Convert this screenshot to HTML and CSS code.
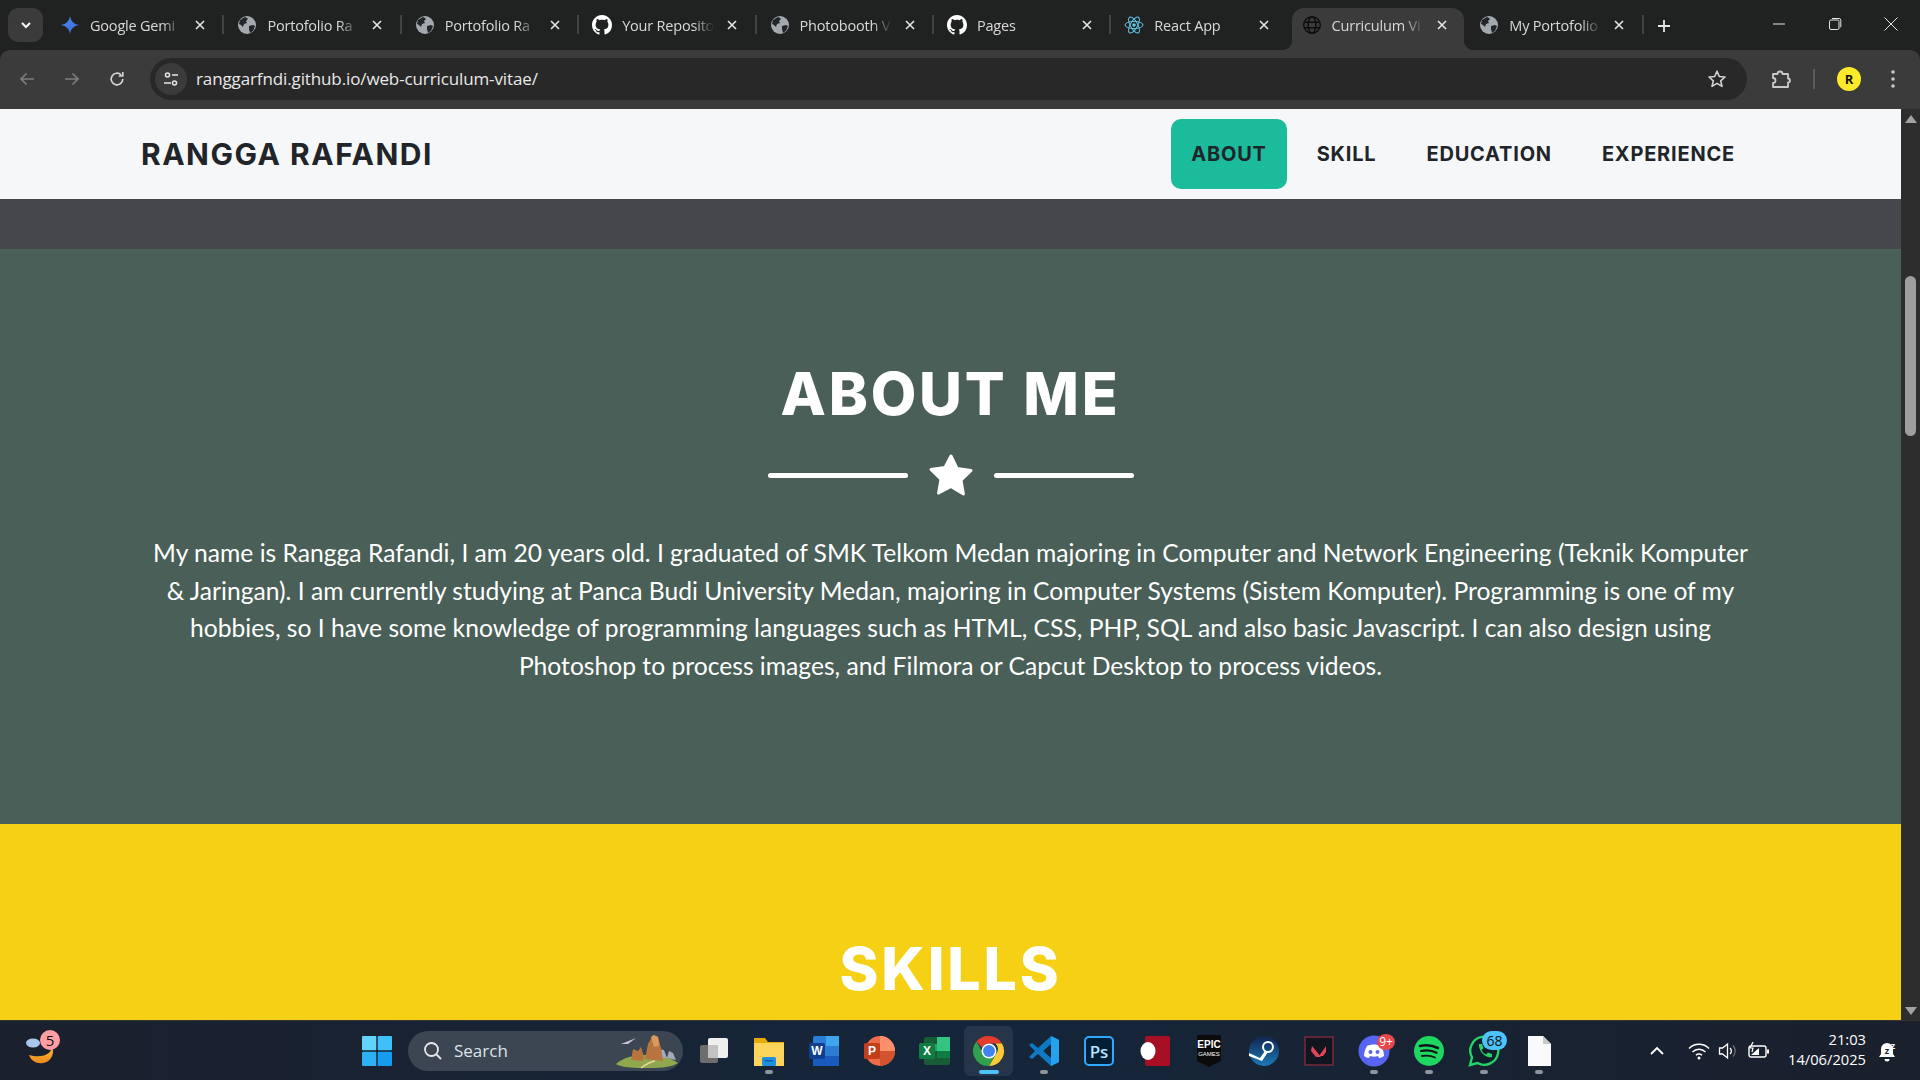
FILE: index.html
```html
<!DOCTYPE html>
<html lang="en">
<head>
    <meta charset="UTF-8">
    <meta name="viewport" content="width=device-width, initial-scale=1.0">
    <title>Curriculum Vitae</title>
    <link rel="stylesheet" href="styles.css">
</head>
<body>
    <svg class="defs" width="0" height="0">
        <symbol id="i-globe" viewBox="0 0 20 20">
            <circle cx="10" cy="10" r="9" fill="#a4a9b0"/>
            <path d="M3 5c2-1 3-2 5-3 1 1 3 1 3 2l-2 2 1 2-3 1-1 3-2-2-2-1zM12 11l4-1 2 1-2 5-3 2-1-4z" fill="#22262a"/>
        </symbol>
        <symbol id="i-github" viewBox="0 0 16 16">
            <path fill="#fff" d="M8 0C3.58 0 0 3.58 0 8c0 3.54 2.29 6.53 5.47 7.59.4.07.55-.17.55-.38 0-.19-.01-.82-.01-1.49-2.01.37-2.53-.49-2.69-.94-.09-.23-.48-.94-.82-1.13-.28-.15-.68-.52-.01-.53.63-.01 1.08.58 1.23.82.72 1.21 1.87.87 2.33.66.07-.52.28-.87.51-1.07-1.78-.2-3.64-.89-3.64-3.95 0-.87.31-1.59.82-2.15-.08-.2-.36-1.02.08-2.12 0 0 .67-.21 2.2.82.64-.18 1.32-.27 2-.27.68 0 1.36.09 2 .27 1.53-1.04 2.2-.82 2.2-.82.44 1.1.16 1.92.08 2.12.51.56.82 1.27.82 2.15 0 3.07-1.87 3.75-3.65 3.95.29.25.54.73.54 1.48 0 1.07-.01 1.93-.01 2.2 0 .21.15.46.55.38A8.013 8.013 0 0016 8c0-4.42-3.58-8-8-8z"/>
        </symbol>
        <symbol id="i-close" viewBox="0 0 12 12">
            <path d="M2 2l8 8M10 2l-8 8" stroke="#e6e6e6" stroke-width="1.6" fill="none"/>
        </symbol>
    </svg>

    <div class="tabstrip">
        <button class="tab-menu">
            <svg width="12" height="12" viewBox="0 0 12 12"><path d="M2 4l4 4 4-4" stroke="#fff" stroke-width="2" fill="none"/></svg>
        </button>
        <div class="tabs">
            <div class="tab">
                <svg class="favicon" viewBox="0 0 20 20"><defs><linearGradient id="gem" x1="0" y1="0" x2="1" y2="1"><stop offset="0" stop-color="#4b8df0"/><stop offset="1" stop-color="#3b64d8"/></linearGradient></defs><path d="M10 1c.8 5 3.6 8.200 9 9-5.400.8-8.200 4-9 9-.8-5-3.600-8.200-9-9 5.400-.8 8.200-4 9-9z" fill="url(#gem)"/></svg>
                <span class="tab-title">Google Gemi</span>
                <svg class="tab-close"><use href="#i-close"/></svg>
            </div>
            <div class="tab">
                <svg class="favicon"><use href="#i-globe"/></svg>
                <span class="tab-title">Portofolio Ra</span>
                <svg class="tab-close"><use href="#i-close"/></svg>
            </div>
            <div class="tab">
                <svg class="favicon"><use href="#i-globe"/></svg>
                <span class="tab-title">Portofolio Ra</span>
                <svg class="tab-close"><use href="#i-close"/></svg>
            </div>
            <div class="tab">
                <svg class="favicon"><use href="#i-github"/></svg>
                <span class="tab-title">Your Reposito</span>
                <svg class="tab-close"><use href="#i-close"/></svg>
            </div>
            <div class="tab">
                <svg class="favicon"><use href="#i-globe"/></svg>
                <span class="tab-title">Photobooth V</span>
                <svg class="tab-close"><use href="#i-close"/></svg>
            </div>
            <div class="tab">
                <svg class="favicon"><use href="#i-github"/></svg>
                <span class="tab-title">Pages</span>
                <svg class="tab-close"><use href="#i-close"/></svg>
            </div>
            <div class="tab">
                <svg class="favicon" viewBox="0 0 20 20"><g fill="none" stroke="#61c6e6" stroke-width="1"><ellipse cx="10" cy="10" rx="9" ry="3.600"/><ellipse cx="10" cy="10" rx="9" ry="3.600" transform="rotate(60 10 10)"/><ellipse cx="10" cy="10" rx="9" ry="3.600" transform="rotate(120 10 10)"/></g><circle cx="10" cy="10" r="1.800" fill="#61c6e6"/></svg>
                <span class="tab-title">React App</span>
                <svg class="tab-close"><use href="#i-close"/></svg>
            </div>
            <div class="tab tab-active">
                <svg class="favicon" viewBox="0 0 20 20"><g fill="none" stroke="#0c0c0c" stroke-width="1.400"><circle cx="10" cy="10" r="8.300"/><ellipse cx="10" cy="10" rx="3.800" ry="8.300"/><path d="M2 7.200h16M2 12.800h16"/></g></svg>
                <span class="tab-title">Curriculum Vi</span>
                <svg class="tab-close"><use href="#i-close"/></svg>
            </div>
            <div class="tab">
                <svg class="favicon"><use href="#i-globe"/></svg>
                <span class="tab-title">My Portofolio</span>
                <svg class="tab-close"><use href="#i-close"/></svg>
            </div>
            <svg class="new-tab" width="16" height="16" viewBox="0 0 16 16"><path d="M8 2v12M2 8h12" stroke="#e6e6e6" stroke-width="1.800"/></svg>
        </div>
        <div class="window-btns">
            <svg width="14" height="14" viewBox="0 0 14 14"><path d="M1 7h12" stroke="#e6e6e6" stroke-width="1"/></svg>
            <svg width="14" height="14" viewBox="0 0 14 14"><rect x="1.500" y="3" width="9.500" height="9.500" rx="1.500" fill="none" stroke="#e6e6e6"/><path d="M4 1.500h7a1.800 1.800 0 0 1 1.800 1.800v7" fill="none" stroke="#e6e6e6"/></svg>
            <svg width="14" height="14" viewBox="0 0 14 14"><path d="M.5.5l13 13M13.500.5l-13 13" stroke="#e6e6e6" stroke-width="1"/></svg>
        </div>
    </div>

    <div class="toolbar">
        <svg class="tool tool-dim" viewBox="0 0 18 18"><path d="M16 9H3M8.500 3.500L3 9l5.500 5.500" fill="none" stroke="#7d7d7d" stroke-width="1.700"/></svg>
        <svg class="tool tool-dim" viewBox="0 0 18 18"><path d="M2 9h13M9.500 3.500L15 9l-5.500 5.500" fill="none" stroke="#7d7d7d" stroke-width="1.700"/></svg>
        <svg class="tool" viewBox="0 0 18 18"><path d="M14.800 9a5.800 5.800 0 1 1-1.700-4.100M14.800 2v4h-4" fill="none" stroke="#d4d4d4" stroke-width="1.700"/></svg>
        <div class="urlbar">
            <span class="site-info">
                <svg width="16" height="16" viewBox="0 0 16 16"><g fill="none" stroke="#e6e6e6" stroke-width="1.500"><circle cx="4.500" cy="4" r="2"/><circle cx="11.500" cy="12" r="2"/><path d="M9 4h6M1 12h7"/></g></svg>
            </span>
            <span class="url">ranggarfndi.github.io/web-curriculum-vitae/</span>
            <svg class="url-star" width="20" height="20" viewBox="0 0 20 20"><path d="M10 2.200l2.300 5.300 5.700.5-4.300 3.800 1.300 5.600-5-3-5 3 1.300-5.600L2 8l5.700-.5z" fill="none" stroke="#d4d4d4" stroke-width="1.600" stroke-linejoin="round"/></svg>
        </div>
        <svg class="puzzle" width="22" height="22" viewBox="0 0 22 22"><path d="M3 6h4.500a2.500 2.500 0 0 1 5 0H18v4.500a2 2 0 0 1 0 4V19H3v-4a2.500 2.500 0 0 0 0-5z" fill="none" stroke="#c9c9c9" stroke-width="1.800" stroke-linejoin="round"/></svg>
        <span class="tool-sep"></span>
        <span class="avatar">R</span>
        <svg class="dots" width="4" height="18" viewBox="0 0 4 18"><circle cx="2" cy="2" r="1.800" fill="#c9c9c9"/><circle cx="2" cy="9" r="1.800" fill="#c9c9c9"/><circle cx="2" cy="16" r="1.800" fill="#c9c9c9"/></svg>
    </div>

    <div class="viewport">
        <div class="page">
            <nav class="navbar">
                <a class="brand" href="#">RANGGA RAFANDI</a>
                <ul class="nav-links">
                    <li><a class="active" href="#">ABOUT</a></li>
                    <li><a href="#">SKILL</a></li>
                    <li><a href="#">EDUCATION</a></li>
                    <li><a href="#">EXPERIENCE</a></li>
                </ul>
            </nav>
            <div class="band"></div>
            <section class="about">
                <h2>ABOUT ME</h2>
                <div class="divider">
                    <span class="line"></span>
                    <svg width="46" height="44" viewBox="0 0 46 44"><path d="M23 3l6 12.500 14 2-10 9.800 2.400 13.700L23 33.500 10.600 40 13 26.300 3 16.500l14-2z" fill="#fff" stroke="#fff" stroke-width="3" stroke-linejoin="round"/></svg>
                    <span class="line"></span>
                </div>
                <p>My name is Rangga Rafandi, I am 20 years old. I graduated of SMK Telkom Medan majoring in Computer and Network Engineering (Teknik Komputer &amp; Jaringan). I am currently studying at Panca Budi University Medan, majoring in Computer Systems (Sistem Komputer). Programming is one of my hobbies, so I have some knowledge of programming languages such as HTML, CSS, PHP, SQL and also basic Javascript. I can also design using Photoshop to process images, and Filmora or Capcut Desktop to process videos.</p>
            </section>
            <section class="skills">
                <h2>SKILLS</h2>
            </section>
        </div>
        <div class="scrollbar">
            <svg width="12" height="8" viewBox="0 0 12 8"><path d="M6 0l6 8H0z" fill="#a3a3a3"/></svg>
            <span class="thumb"></span>
            <svg class="arrow-down" width="12" height="8" viewBox="0 0 12 8"><path d="M6 8l6-8H0z" fill="#a3a3a3"/></svg>
        </div>
    </div>

    <div class="taskbar">
        <div class="weather">
            <svg width="36" height="36" viewBox="0 0 36 36"><defs><linearGradient id="moon" x1="0" y1="0" x2="0" y2="1"><stop offset="0" stop-color="#f8c23a"/><stop offset="1" stop-color="#ee8a1c"/></linearGradient></defs><path d="M26 12c3 8-8 14-22 10 2 6 8 9 14 8 8-1 13-10 8-18z" fill="url(#moon)"/><ellipse cx="8" cy="10" rx="7" ry="4.500" fill="#a9c6ec"/></svg>
            <span class="badge badge-pink">5</span>
        </div>
        <svg class="start" width="30" height="30" viewBox="0 0 30 30"><rect x="0" y="0" width="14.300" height="14.300" rx="1" fill="#62d3fb"/><rect x="15.700" y="0" width="14.300" height="14.300" rx="1" fill="#3fc0f8"/><rect x="0" y="15.700" width="14.300" height="14.300" rx="1" fill="#2eb0f5"/><rect x="15.700" y="15.700" width="14.300" height="14.300" rx="1" fill="#159cf0"/></svg>
        <div class="search">
            <svg width="20" height="20" viewBox="0 0 20 20"><circle cx="8.500" cy="8.500" r="6.500" fill="none" stroke="#e8e8e8" stroke-width="1.800"/><path d="M13.500 13.500L18 18" stroke="#e8e8e8" stroke-width="1.800"/></svg>
            <span>Search</span>
            <svg class="search-art" width="64" height="36" viewBox="0 0 64 36"><path d="M1 31c8-7 18-9 30-9s24 2 32 8c-6 4-16 5-28 5S6 35 1 31z" fill="#8fa84e"/><path d="M42 24l2-8 5 1 3 8zM52 25l2-7 4 2 3 7z" fill="#a7a9bd"/><path d="M16 27l2-11 5 2 3-4 3 10-1 4zM30 26l3-15 5-9 5 2 3 11 2 13z" fill="#b9733e"/><path d="M36 4l3-2 4 2 1 9-5 1z" fill="#d99a5c"/><path d="M6 11l15-6-8 6z" fill="#c9c4da"/><path d="M26 35c4-3 8-6 14-7" stroke="#e8d9a0" stroke-width="1.500" fill="none"/></svg>
        </div>
        <div class="apps">
            <div class="app">
                <svg viewBox="0 0 32 32"><rect x="2" y="10" width="18" height="18" rx="2" fill="#6d6d6d"/><rect x="10" y="3" width="20" height="20" rx="2" fill="#efefef"/><rect x="10" y="10" width="10" height="13" fill="#c2c2c2"/></svg>
            </div>
            <div class="app running">
                <svg viewBox="0 0 32 32"><path d="M1 3h11l3 4h16v24H1z" fill="#e8a90d"/><rect x="1" y="8" width="30" height="23" fill="#fdd55c"/><rect x="9" y="22" width="14" height="9" rx="1.500" fill="#1f8fe0"/><rect x="12" y="25" width="8" height="1.500" fill="#0b5ea8"/></svg>
            </div>
            <div class="app">
                <svg viewBox="0 0 32 32"><rect x="5" y="1" width="26" height="30" rx="2" fill="#2b7cd3"/><rect x="18" y="1" width="13" height="10" fill="#41a5ee"/><rect x="5" y="21" width="26" height="10" fill="#185abd"/><rect x="1" y="8" width="16" height="16" rx="1.500" fill="#103f91"/><text x="9" y="20" class="app-letter">W</text></svg>
            </div>
            <div class="app">
                <svg viewBox="0 0 32 32"><circle cx="17" cy="16" r="15" fill="#ed6c47"/><path d="M17 1a15 15 0 0 1 15 15H17z" fill="#ff8f6b"/><path d="M17 16h15a15 15 0 0 1-15 15z" fill="#d35230"/><rect x="1" y="8" width="16" height="16" rx="1.500" fill="#c43e1c"/><text x="9" y="20" class="app-letter">P</text></svg>
            </div>
            <div class="app">
                <svg viewBox="0 0 32 32"><rect x="6" y="2" width="26" height="28" rx="2" fill="#185c37"/><rect x="19" y="2" width="13" height="14" fill="#33c481"/><rect x="6" y="9" width="13" height="7" fill="#21a366"/><rect x="19" y="16" width="13" height="7" fill="#107c41"/><rect x="1" y="8" width="16" height="16" rx="1.500" fill="#107c41"/><text x="9" y="20" class="app-letter">X</text></svg>
            </div>
            <div class="app app-active">
                <svg viewBox="0 0 32 32"><path d="M16 1a15 15 0 0 1 13 7.500H16a7.500 7.500 0 0 0-6.700 4.200L3.500 6.500A15 15 0 0 1 16 1z" fill="#e33b2e"/><path d="M29 8.500A15 15 0 0 1 16 31l6.500-11.300a7.500 7.500 0 0 0 0-11.200z" fill="#fcc934"/><path d="M3.500 6.500L9.800 18A7.500 7.500 0 0 0 22.500 19.700L16 31A15 15 0 0 1 3.500 6.500z" fill="#30a04e"/><circle cx="16" cy="16" r="7.500" fill="#fff"/><circle cx="16" cy="16" r="6" fill="#3f84ee"/></svg>
            </div>
            <div class="app running">
                <svg viewBox="0 0 32 32"><path d="M23 1l8 4v22l-8 4-13-12-6 5-3-2 6-6-6-6 3-2 6 5z" fill="#0e7ac4"/><path d="M23 1l8 4v22l-8 4zM23 9l-8 7 8 7z" fill="#24a2f0"/><path d="M23 9v14l-8-7z" fill="#142536"/></svg>
            </div>
            <div class="app">
                <svg viewBox="0 0 32 32"><rect x="2" y="2" width="28" height="28" rx="4" fill="#001e36" stroke="#31a8ff" stroke-width="2"/><text x="16" y="22.500" class="app-ps">Ps</text></svg>
            </div>
            <div class="app">
                <svg viewBox="0 0 32 32"><rect x="7" y="1" width="25" height="30" rx="2" fill="#a80f24"/><ellipse cx="10" cy="16" rx="7.500" ry="9" fill="#fff"/></svg>
            </div>
            <div class="app">
                <svg viewBox="0 0 32 32"><path d="M4 0h24v26l-12 6-12-6z" fill="#0b0b0b"/><text x="16" y="13" class="app-epic">EPIC</text><text x="16" y="21" class="app-games">GAMES</text></svg>
            </div>
            <div class="app">
                <svg viewBox="0 0 32 32"><defs><linearGradient id="steam" x1="0" y1="0" x2="0" y2="1"><stop offset="0" stop-color="#12234d"/><stop offset="1" stop-color="#1b7ab8"/></linearGradient></defs><circle cx="16" cy="16" r="15" fill="url(#steam)"/><circle cx="20" cy="12" r="5" fill="none" stroke="#fff" stroke-width="2"/><path d="M1 18l11 5 5-7 3 1-6 9-13-5z" fill="#fff"/></svg>
            </div>
            <div class="app">
                <svg viewBox="0 0 32 32"><rect x="2" y="2" width="28" height="28" fill="#11151f" stroke="#7a2a3a" stroke-width="1.500"/><path d="M9 11l9 11h-5l-5-6zM23 11v6l-3 4h-4z" fill="#e0455a"/></svg>
            </div>
            <div class="app running">
                <svg viewBox="0 0 32 32"><circle cx="16" cy="16" r="15.500" fill="#5865f2"/><path d="M9 11c4-2 10-2 14 0 2 3 3 7 3 10-2 1-3 2-5 2l-1-2c-3 1-5 1-8 0l-1 2c-2 0-3-1-5-2 0-3 1-7 3-10z" fill="#fff"/><circle cx="12.500" cy="17" r="2" fill="#5865f2"/><circle cx="19.500" cy="17" r="2" fill="#5865f2"/></svg>
                <span class="badge badge-red">9+</span>
            </div>
            <div class="app running">
                <svg viewBox="0 0 32 32"><circle cx="16" cy="16" r="15" fill="#1ed760"/><g fill="none" stroke="#10141c" stroke-linecap="round"><path d="M7 11c6-1.500 12-1 18 2" stroke-width="2.600"/><path d="M8 16c5-1 11-.7 15.500 1.800" stroke-width="2.200"/><path d="M9 21c4-.8 9-.5 13 1.500" stroke-width="1.800"/></g></svg>
            </div>
            <div class="app running">
                <svg viewBox="0 0 32 32"><path d="M2 30l2-7.500A14 14 0 1 1 9.500 28z" fill="#111f2b" stroke="#25d366" stroke-width="2.400"/><path d="M11 9l3 0 1.500 4-2 2c1 2 2.500 3.500 4.500 4.500l2-2 4 1.500v3c-6 2-14-6-13-13z" fill="#25d366"/></svg>
                <span class="badge badge-blue">68</span>
            </div>
            <div class="app running">
                <svg viewBox="0 0 32 32"><path d="M5 1h15l8 8v22H5z" fill="#fafafa"/><path d="M20 1l8 8h-8z" fill="#c9c9c9"/></svg>
            </div>
        </div>
        <div class="tray">
            <svg class="tray-up" width="14" height="9" viewBox="0 0 14 9"><path d="M1 8l6-6 6 6" fill="none" stroke="#fff" stroke-width="1.800"/></svg>
            <svg class="tray-icon" width="22" height="18" viewBox="0 0 22 18"><g fill="none" stroke="#fff" stroke-width="1.500"><path d="M1 6.500a14 14 0 0 1 20 0"/><path d="M4.500 10a9 9 0 0 1 13 0"/><path d="M8 13.300a4.200 4.200 0 0 1 6 0"/></g><circle cx="11" cy="16" r="1.500" fill="#fff"/></svg>
            <svg class="tray-icon" width="22" height="18" viewBox="0 0 22 18"><path d="M1.500 6h3l5-4v14l-5-4h-3z" fill="none" stroke="#fff" stroke-width="1.300"/><path d="M12 6a4 4 0 0 1 0 6" fill="none" stroke="#fff" stroke-width="1.300"/><path d="M15 3.500a8 8 0 0 1 0 11" fill="none" stroke="#777" stroke-width="1.100"/></svg>
            <svg class="tray-icon" width="22" height="18" viewBox="0 0 22 18"><rect x="1" y="4" width="17" height="11" rx="2" fill="none" stroke="#fff" stroke-width="1.400"/><path d="M3 13l8-7v7z" fill="#fff"/><rect x="19" y="7.500" width="2" height="4" fill="#fff"/><path d="M5 0l-3 6h3l-1 4" fill="none" stroke="#fff" stroke-width="1.200"/></svg>
            <div class="clock">
                <span>21:03</span>
                <span>14/06/2025</span>
            </div>
            <svg class="bell" width="22" height="24" viewBox="0 0 22 24"><path d="M10 4a6 6 0 0 0-6 6v5l-2 3h16l-2-3v-5a6 6 0 0 0-6-6z" fill="#fff"/><path d="M7.500 20a2.500 2.500 0 0 0 5 0z" fill="#fff"/><text x="10" y="15" class="bell-z">z</text><text x="16" y="10" class="bell-z-top">z</text></svg>
        </div>
    </div>
</body>
</html>
```

FILE: styles.css
```css
* {
    box-sizing: border-box;
}
html, body {
    height: 100%;
}
body {
    margin: 0;
    display: flex;
    flex-direction: column;
    height: 1080px;
    overflow: hidden;
    background-color: #202222;
    font-family: "Open Sans", sans-serif;
}
.defs {
    display: none;
}

/* tab strip */
.tabstrip {
    height: 50px;
    flex: none;
    display: flex;
    background-color: #202222;
    color: #d8d8d8;
}
.tab-menu {
    width: 35px;
    height: 34px;
    margin: 8px 0 0 8px;
    padding: 0;
    border: none;
    border-radius: 10px;
    background-color: #3b3b3b;
    display: flex;
    align-items: center;
    justify-content: center;
    flex: none;
}
.tabs {
    display: flex;
    align-items: flex-end;
    margin-left: 4px;
    flex: none;
    width: 1680px;
}
.tab {
    position: relative;
    width: 177.4px;
    height: 42px;
    flex: none;
    display: flex;
    align-items: center;
    padding: 0 0 8px 13px;
    font-size: 14.5px;
}
.tab::after {
    content: "";
    position: absolute;
    right: 0;
    top: 7px;
    width: 2px;
    height: 19px;
    background-color: #414344;
}
.tab:nth-child(7)::after {
    display: none;
}
.tab-active {
    background-color: #3b3b3b;
    border-radius: 12px 12px 0 0;
    width: 172px;
    margin: 0 2.8px;
    padding-left: 10px;
}
/* flared bottom corners of the open tab */
.tab-active::before,
.tab-active::after {
    content: "";
    position: absolute;
    top: auto;
    bottom: 0;
    width: 10px;
    height: 10px;
    background: radial-gradient(circle at 0 0, transparent 10px, #3b3b3b 10.5px);
}
.tab-active::before {
    left: -10px;
}
.tab-active::after {
    right: -10px;
    background: radial-gradient(circle at 100% 0, transparent 10px, #3b3b3b 10.5px);
}
.favicon {
    width: 20px;
    height: 20px;
    flex: none;
}
.tab-title {
    width: 92px;
    margin-left: 10px;
    white-space: nowrap;
    letter-spacing: -0.2px;
    -webkit-mask-image: linear-gradient(to right, #000 78%, transparent 100%);
    mask-image: linear-gradient(to right, #000 78%, transparent 100%);
    flex: none;
}
.tab-close {
    width: 12px;
    height: 12px;
    margin-left: 12px;
    flex: none;
}
.new-tab {
    flex: none;
    margin: 0 0 16px 12px;
}
.window-btns {
    margin-left: auto;
    display: flex;
    gap: 42px;
    padding: 17px 22px 0 0;
}

/* browser toolbar */
.toolbar {
    height: 59px;
    flex: none;
    display: flex;
    align-items: center;
    background-color: #3b3b3b;
    border-radius: 10px 10px 0 0;
    padding: 0 0 2px 18px;
}
.tool {
    width: 18px;
    height: 18px;
    margin-right: 27px;
    flex: none;
}
.urlbar {
    width: 1597px;
    height: 42px;
    margin-left: -3px;
    border-radius: 21px;
    background-color: #282828;
    display: flex;
    align-items: center;
    padding: 0 20px 0 5px;
    flex: none;
}
.site-info {
    width: 32px;
    height: 32px;
    border-radius: 50%;
    background-color: #3b3b3b;
    display: flex;
    align-items: center;
    justify-content: center;
    flex: none;
}
.url {
    margin-left: 9px;
    font-size: 17px;
    letter-spacing: -0.12px;
    color: #e8e8e8;
}
.url-star {
    margin-left: auto;
}
.puzzle {
    margin-left: 23px;
}
.tool-sep {
    width: 2px;
    height: 20px;
    margin-left: 21px;
    background-color: #5a5a5a;
}
.avatar {
    width: 24px;
    height: 24px;
    margin-left: 22px;
    border-radius: 50%;
    background-color: #fbe92a;
    color: #111;
    font-size: 13px;
    font-weight: 700;
    line-height: 24px;
    text-align: center;
}
.dots {
    margin-left: 30px;
}

/* page */
.viewport {
    flex: 1;
    min-height: 0;
    display: flex;
}
.page {
    flex: 1;
    min-width: 0;
    overflow: hidden;
    background-color: #46474c;
}
.navbar {
    height: 90px;
    display: flex;
    align-items: center;
    justify-content: space-between;
    padding: 0 146px 0 141px;
    background-color: #f6f7f9;
}
.brand {
    font-family: Inter, sans-serif;
    font-size: 30px;
    font-weight: 700;
    letter-spacing: 1.5px;
    color: #212529;
    text-decoration: none;
}
.nav-links {
    display: flex;
    gap: 10px;
    list-style: none;
    margin: 0;
    padding: 0;
}
.nav-links a {
    display: block;
    padding: 0 20px;
    height: 70px;
    line-height: 70px;
    border-radius: 10px;
    font-family: Inter, sans-serif;
    font-size: 20px;
    font-weight: 700;
    letter-spacing: 0.8px;
    color: #212529;
    text-decoration: none;
}
.nav-links a.active {
    background-color: #1abc9c;
}
.band {
    height: 50px;
}
.about, .skills {
    text-align: center;
    padding-top: 109px;
}
.about {
    height: 575px;
    background-color: #4a5f57;
    color: #fff;
}
.skills {
    height: 300px;
    background-color: #f5d015;
    color: #fff;
}
h2 {
    margin: 0;
    font-family: Inter, sans-serif;
    font-size: 59px;
    font-weight: 800;
    letter-spacing: 2.8px;
    line-height: 72px;
}
.divider {
    display: flex;
    align-items: center;
    justify-content: center;
    gap: 20px;
    margin-top: 23px;
}
.line {
    width: 140px;
    height: 5px;
    border-radius: 3px;
    background-color: #fff;
}
.about p {
    width: 1606px;
    margin: 37px auto 0;
    font-family: Lato, sans-serif;
    font-size: 24.65px;
    line-height: 37.6px;
}
.scrollbar {
    width: 19px;
    flex: none;
    display: flex;
    flex-direction: column;
    align-items: center;
    padding: 6px 0 5px;
    background-color: #2d2d2d;
}
.thumb {
    width: 11px;
    height: 160px;
    margin-top: 153px;
    border-radius: 6px;
    background-color: #9e9e9e;
}
.arrow-down {
    margin-top: auto;
}

/* windows taskbar */
.taskbar {
    height: 60px;
    flex: none;
    display: flex;
    align-items: center;
    background: linear-gradient(90deg, #1b202d 0%, #15263a 50%, #1a202c 100%);
    border-top: 1px solid #333;
    color: #fff;
}
.weather {
    position: relative;
    margin-left: 25px;
    width: 36px;
    height: 36px;
    flex: none;
}
.badge {
    position: absolute;
    border-radius: 50%;
    text-align: center;
}
.badge-pink {
    top: -3px;
    right: 1px;
    width: 20px;
    height: 20px;
    line-height: 20px;
    background-color: #ff9ea5;
    color: #111;
    font-size: 15px;
}
.start {
    margin-left: 301px;
    flex: none;
}
.search {
    width: 275px;
    height: 40px;
    margin-left: 16px;
    border-radius: 20px;
    background-color: #3b4652;
    display: flex;
    align-items: center;
    padding: 0 4px 0 15px;
    font-size: 17px;
    color: #dfe3e8;
    flex: none;
}
.search span {
    margin-left: 11px;
}
.search-art {
    margin-left: auto;
}
.apps {
    display: flex;
    margin-left: 3px;
    flex: none;
}
.app {
    position: relative;
    width: 55px;
    height: 50px;
    display: flex;
    align-items: center;
    justify-content: center;
    border-radius: 8px;
}
.app > svg {
    width: 32px;
    height: 32px;
}
.app.running::after,
.app-active::after {
    content: "";
    position: absolute;
    bottom: 2px;
    left: 50%;
    width: 8px;
    height: 4px;
    margin-left: -4px;
    border-radius: 2px;
    background-color: #8d949c;
}
.app-active {
    background-color: #263648;
    border-left: 3px solid #15263a;
    border-right: 3px solid #15263a;
}
.app-active::after {
    width: 20px;
    margin-left: -10px;
    background-color: #4cc2ff;
}
.app-letter {
    font-family: "Liberation Sans", sans-serif;
    font-size: 12px;
    font-weight: 700;
    fill: #fff;
    text-anchor: middle;
}
.app-ps {
    font-family: "Open Sans", sans-serif;
    font-size: 17px;
    font-weight: 600;
    fill: #b9e2ff;
    text-anchor: middle;
}
.app-epic {
    font-family: "Liberation Sans", sans-serif;
    font-size: 10px;
    font-weight: 700;
    fill: #fff;
    text-anchor: middle;
}
.app-games {
    font-family: "Liberation Sans", sans-serif;
    font-size: 6px;
    fill: #fff;
    text-anchor: middle;
}
.badge-red {
    top: 8px;
    right: 6px;
    width: 18px;
    height: 16px;
    line-height: 16px;
    background-color: #e5484d;
    font-size: 12px;
}
.badge-blue {
    top: 5px;
    right: 4px;
    width: 25px;
    height: 19px;
    border-radius: 10px;
    line-height: 19px;
    background-color: #4cc2ff;
    color: #111;
    font-size: 14px;
}
.tray {
    display: flex;
    align-items: center;
    margin-left: auto;
    padding-right: 21px;
    flex: none;
}
.tray-icon {
    margin-left: 8px;
}
.tray-icon:first-of-type {
    margin-left: 0;
}
.tray-up {
    margin-right: 16px;
}
.clock {
    width: 96px;
    display: flex;
    flex-direction: column;
    align-items: flex-end;
    padding-bottom: 4px;
    font-size: 14.7px;
    line-height: 20px;
}
.bell {
    margin-left: 11px;
}
.bell-z {
    font-family: "Open Sans", sans-serif;
    font-size: 9px;
    font-weight: 700;
    fill: #1a202c;
    text-anchor: middle;
}
.bell-z-top {
    font-family: "Open Sans", sans-serif;
    font-size: 9px;
    font-weight: 700;
    fill: #fff;
    text-anchor: middle;
}
```
